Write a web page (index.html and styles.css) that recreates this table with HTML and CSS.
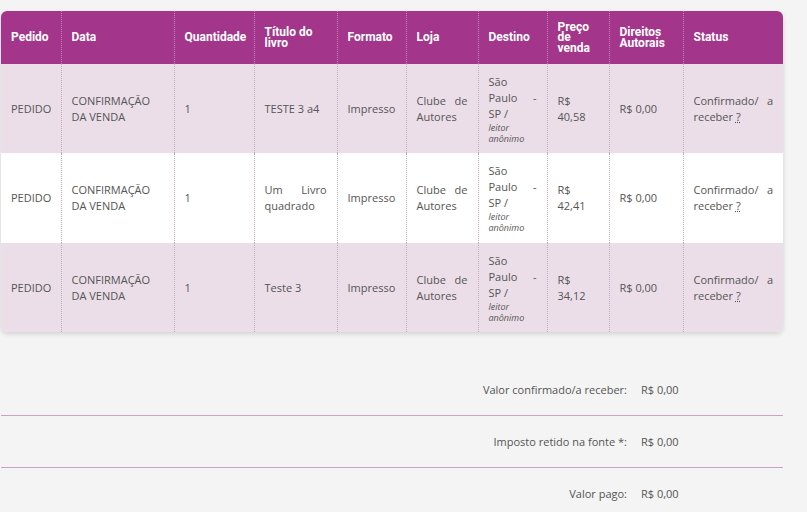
FILE: index.html
```html
<!DOCTYPE html>
<html lang="pt-BR">
<head>
<meta charset="utf-8">
<title>Vendas</title>
<link rel="stylesheet" href="styles.css">
</head>
<body>
<div class="page">
  <div class="card">
    <table class="sales">
      <colgroup>
        <col style="width:60px"><col style="width:113px"><col style="width:80px"><col style="width:83px"><col style="width:69px"><col style="width:72px"><col style="width:69px"><col style="width:62px"><col style="width:74px"><col style="width:100px">
      </colgroup>
      <thead>
        <tr>
          <th>Pedido</th><th>Data</th><th>Quantidade</th><th>Título do livro</th><th>Formato</th><th>Loja</th><th>Destino</th><th>Preço de venda</th><th>Direitos Autorais</th><th>Status</th>
        </tr>
      </thead>
      <tbody>
        <tr class="odd">
          <td>PEDIDO</td><td>CONFIRMAÇÃO DA VENDA</td><td>1</td><td>TESTE 3 a4</td><td>Impresso</td><td>Clube de Autores</td>
          <td>São Paulo - SP / <span class="anon">leitor anônimo</span></td><td>R$ 40,58</td><td>R$ 0,00</td><td>Confirmado/ a receber <abbr title="Pagamento confirmado">?</abbr></td>
        </tr>
        <tr class="even">
          <td>PEDIDO</td><td>CONFIRMAÇÃO DA VENDA</td><td>1</td><td>Um Livro quadrado</td><td>Impresso</td><td>Clube de Autores</td>
          <td>São Paulo - SP / <span class="anon">leitor anônimo</span></td><td>R$ 42,41</td><td>R$ 0,00</td><td>Confirmado/ a receber <abbr title="Pagamento confirmado">?</abbr></td>
        </tr>
        <tr class="odd">
          <td>PEDIDO</td><td>CONFIRMAÇÃO DA VENDA</td><td>1</td><td>Teste 3</td><td>Impresso</td><td>Clube de Autores</td>
          <td>São Paulo - SP / <span class="anon">leitor anônimo</span></td><td>R$ 34,12</td><td>R$ 0,00</td><td>Confirmado/ a receber <abbr title="Pagamento confirmado">?</abbr></td>
        </tr>
      </tbody>
    </table>
  </div>

  <div class="summary">
    <div class="sum-row"><span class="sum-label">Valor confirmado/a receber:</span><span class="sum-value">R$ 0,00</span></div>
    <div class="sum-row"><span class="sum-label">Imposto retido na fonte *:</span><span class="sum-value">R$ 0,00</span></div>
    <div class="sum-row last"><span class="sum-label">Valor pago:</span><span class="sum-value">R$ 0,00</span></div>
  </div>
</div>
<div class="footer"></div>
</body>
</html>
```

FILE: styles.css
```css
html, body {
  margin: 0;
  padding: 0;
  background: #f4f4f4;
}

body {
  font-family: "Open Sans", "Liberation Sans", sans-serif;
  font-size: 11px;
  color: #555;
}

.page {
  width: 782px;
  padding: 11px 0 0 1px;
}

.card {
  border-radius: 6px;
  overflow: hidden;
  box-shadow: 0 2px 5px rgba(0, 0, 0, 0.14);
  background: #fff;
}

.sales {
  width: 782px;
  table-layout: fixed;
  border-collapse: collapse;
}

.sales th {
  background: #a3368a;
  color: #fff;
  font-family: Roboto, "Liberation Sans", sans-serif;
  font-weight: 700;
  font-size: 12px;
  line-height: 10.5px;
  text-align: left;
  height: 53px;
  padding: 0 10px;
  vertical-align: middle;
  border-left: 1px dotted #c77fb6;
}

.sales td {
  height: 89px;
  padding: 0 10px;
  line-height: 16px;
  text-align: justify;
  vertical-align: middle;
  border-left: 1px dotted #c3a9c0;
}

.sales tr.even td {
  height: 90px;
}

.sales th:first-child,
.sales td:first-child {
  border-left: none;
}

.sales tr.odd td {
  background: #ebdee8;
}

.sales tr.even td {
  background: #fff;
}

.anon {
  display: block;
  font-style: italic;
  font-size: 9px;
  line-height: 11px;
  text-align: left;
}

abbr {
  text-decoration: underline dotted;
  cursor: help;
}

.summary {
  margin-top: 32px;
}

.sum-row {
  display: grid;
  grid-template-columns: 626px auto;
  column-gap: 14px;
  align-items: center;
  height: 51px;
  border-bottom: 1px solid #c9a6bf;
}

.sum-row.last {
  box-sizing: border-box;
  height: 44px;
  padding-top: 18px;
  align-items: start;
  border-bottom: none;
}

.sum-label {
  text-align: right;
}

.footer {
  height: 20px;
  background: #333;
}
```
